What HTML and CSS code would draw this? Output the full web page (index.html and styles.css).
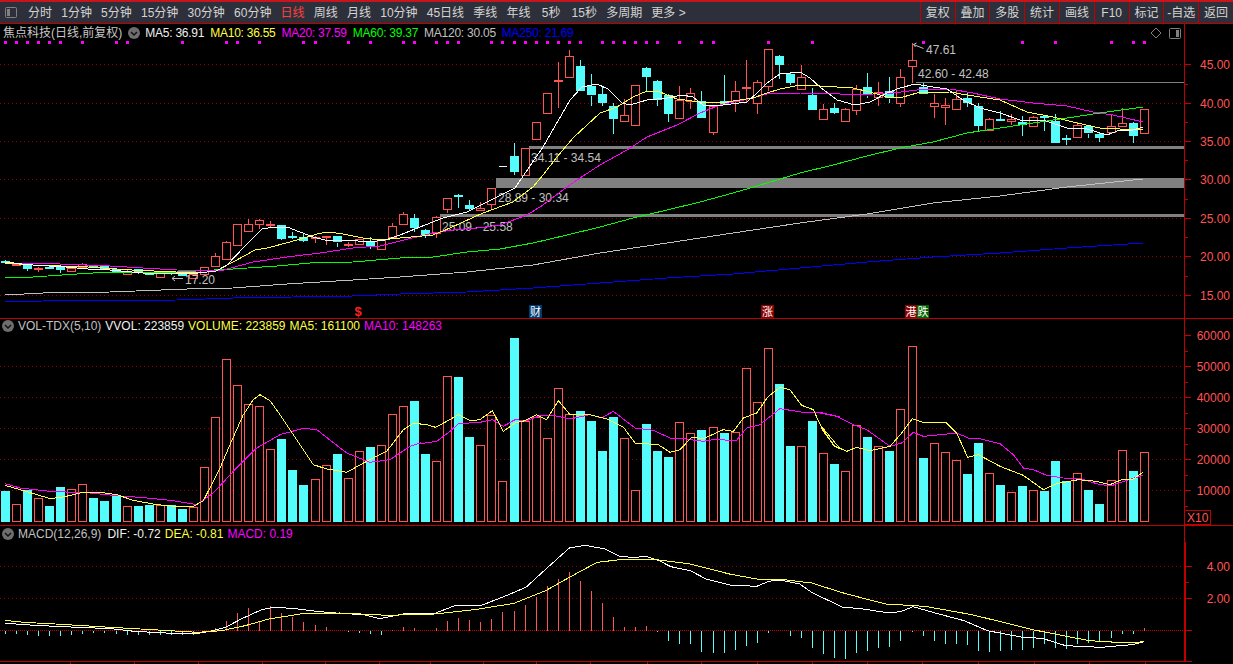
FILE: index.html
```html
<!DOCTYPE html>
<html lang="zh-CN">
<head>
<meta charset="utf-8">
<title>焦点科技</title>
<link rel="stylesheet" href="styles.css">
</head>
<body>
<div class="app">
  <header class="toolbar">
    <svg class="panel-icon toolbar-icon" viewBox="0 0 12 11"><rect class="pi-frame" x="0.5" y="0.5" width="11" height="10" rx="1"/><rect class="pi-fill" x="2" y="2" width="3" height="7"/></svg>
    <nav class="periods">
      <span>分时</span><span>1分钟</span><span>5分钟</span><span>15分钟</span><span>30分钟</span><span>60分钟</span><span class="active">日线</span><span>周线</span><span>月线</span><span>10分钟</span><span>45日线</span><span>季线</span><span>年线</span><span class="spaced">5秒</span><span class="spaced">15秒</span><span>多周期</span><span>更多 &gt;</span>
    </nav>
    <nav class="tools">
      <span>复权</span><span>叠加</span><span>多股</span><span>统计</span><span>画线</span><span>F10</span><span>标记</span><span>-自选</span><span>返回</span>
    </nav>
  </header>

  <section class="panel panel-price">
    <div class="legend">
      <span class="title">焦点科技(日线,前复权)</span>
      <svg class="chev chev-ma" viewBox="0 0 12 12"><circle class="chev-bg" cx="6" cy="6" r="6"/><path class="chev-mark" d="M3 5l3 3 3-3"/></svg>
      <span class="white ma">MA5: 36.91</span>
      <span class="yellow ma">MA10: 36.55</span>
      <span class="magenta ma">MA20: 37.59</span>
      <span class="green ma">MA60: 39.37</span>
      <span class="gray ma">MA120: 30.05</span>
      <span class="blue ma">MA250: 21.69</span>
      <span class="legend-icons">
        <svg class="diamond" viewBox="0 0 12 12"><path d="M6 1l5 5-5 5-5-5z"/></svg>
        <svg class="panel-icon" viewBox="0 0 12 11"><rect class="pi-frame" x="0.5" y="0.5" width="11" height="10" rx="1"/><rect class="pi-fill" x="7" y="2" width="3" height="7"/></svg>
      </span>
    </div>
    <svg id="price" class="plot plot-price" viewBox="0 40 1233 278"></svg>
  </section>

  <section class="panel panel-vol">
    <div class="legend">
      <svg class="chev chev-first" viewBox="0 0 12 12"><circle class="chev-bg" cx="6" cy="6" r="6"/><path class="chev-mark" d="M3 5l3 3 3-3"/></svg>
      <span class="gray vol-name">VOL-TDX(5,10)</span>
      <span class="white">VVOL: 223859</span>
      <span class="yellow">VOLUME: 223859</span>
      <span class="yellow">MA5: 161100</span>
      <span class="magenta">MA10: 148263</span>
    </div>
    <svg id="vol" class="plot plot-vol" viewBox="0 330 1233 195"></svg>
  </section>

  <section class="panel panel-macd">
    <div class="legend">
      <svg class="chev chev-first" viewBox="0 0 12 12"><circle class="chev-bg" cx="6" cy="6" r="6"/><path class="chev-mark" d="M3 5l3 3 3-3"/></svg>
      <span class="gray vol-name">MACD(12,26,9)</span>
      <span class="white">DIF: -0.72</span>
      <span class="yellow">DEA: -0.81</span>
      <span class="magenta">MACD: 0.19</span>
    </div>
    <svg id="macd" class="plot plot-macd" viewBox="0 542 1233 122"></svg>
  </section>
</div>
<script src="chart.js"></script>
</body>
</html>
```

FILE: styles.css
```css
* { box-sizing: border-box; }
html, body { margin: 0; height: 100%; background: #000; overflow: hidden; }
body { font: 12px/16px "Liberation Sans", "Noto Sans CJK SC", sans-serif; color: #c8c8c8; }
.app { width: 1233px; height: 664px; display: flex; flex-direction: column; }

.toolbar {
  height: 24px; flex: none; display: flex; align-items: center;
  background: #2d303a; border-top: 2px solid #c8141c; border-bottom: 1px solid #c00000;
  padding-left: 5px;
}
.toolbar-icon { margin-right: 11px; }
.periods { display: flex; gap: 9.2px; white-space: nowrap; color: #d4d4d4; }
.periods .active { color: #ff4040; }
.periods .spaced { margin-left: 2px; }
.tools { margin-left: auto; display: flex; align-self: stretch; color: #d4d4d4; }
.tools span { width: 34.8px; display: flex; align-items: center; justify-content: center; border-left: 1px solid #c00000; white-space: nowrap; }

.panel-icon { width: 12px; height: 11px; flex: none; }
.pi-frame { fill: none; stroke: #808080; }
.pi-fill { fill: #808080; }

.panel { flex: none; display: flex; flex-direction: column; }
.panel-price { height: 294px; }
.panel-vol { height: 207px; border-top: 1px solid #c00000; }
.panel-macd { height: 139px; border-top: 1px solid #c00000; }

.legend {
  height: 16px; width: 1185px; flex: none; display: flex; align-items: center; gap: 4px;
  border-right: 1px solid #c00000; padding-left: 2px; white-space: nowrap;
}
.panel-price .legend { padding-top: 2px; padding-left: 3px; gap: 6px; }
.panel-vol .legend { height: 11px; padding-top: 2px; }
.panel-macd .vol-name { margin-right: 2px; }
.chev { width: 12px; height: 12px; flex: none; }
.chev-first { margin-right: 0; }
.chev-ma { margin-right: -1px; }
.chev-bg { fill: #6e6e6e; }
.chev-mark { fill: none; stroke: #111; stroke-width: 1.5; }
.ma { letter-spacing: -0.25px; }
.white { color: #f0f0f0; }
.yellow { color: #ffff40; }
.magenta { color: #ff00ff; }
.green { color: #00ff00; }
.gray { color: #c0c0c0; }
.blue { color: #0000ff; }
.legend-icons { margin-left: auto; display: flex; align-items: center; gap: 7px; padding-right: 3px; }
.diamond { width: 12px; height: 12px; }
.diamond path { fill: none; stroke: #808080; }

.plot { display: block; width: 1233px; flex: none; }
.plot-price { height: 278px; }
.plot-vol { height: 195px; }
.plot-macd { height: 122px; }
.plot text { font: 12px "Liberation Sans", "Noto Sans CJK SC", sans-serif; }

.crisp { shape-rendering: crispEdges; }
.grid { stroke: #900000; stroke-dasharray: 1 3; fill: none; }
.zero { stroke: #d00000; stroke-dasharray: 1 1; fill: none; }
.axis { stroke: #c00000; fill: none; }
.axis-wide { stroke: #c00000; stroke-width: 2; fill: none; }
.tick { stroke: #c00000; }
.axis-label { fill: #ff5454; text-anchor: end; }
.band { fill: #808080; }
.dot { fill: #ff00ff; }
.up { stroke: #ff5454; fill: #000; }
.up-solid { fill: #ff5454; }
.up-line { stroke: #ff5454; fill: none; }
.down { fill: #54fcfc; }
.down-line { stroke: #54fcfc; fill: none; }
.flat { fill: #f0f0f0; }
.line { fill: none; }
.l-white { stroke: #ffffff; }
.l-yellow { stroke: #ffff40; }
.l-magenta { stroke: #ff00ff; }
.l-green { stroke: #00ff00; }
.l-gray { stroke: #c0c0c0; }
.l-blue { stroke: #0000ff; }
.note { fill: #c0c0c0; }
.note-line { fill: none; stroke: #c0c0c0; }
.tag-text { fill: #fff; text-anchor: middle; }
.plot text.tag-text { font-size: 11px; }
.tag-blue { fill: #003a70; }
.tag-red { fill: #8b0000; }
.tag-green { fill: #006400; }
.plot text.dollar { fill: #ff2020; font-size: 13px; font-weight: bold; text-anchor: middle; }
.x10-box { fill: #000; stroke: #c00000; }
.x10-text { fill: #ff5454; }
```

FILE: chart.js
```js
(function () {
  var NS = 'http://www.w3.org/2000/svg';
  function add(svg, tag, attrs, text) {
    var n = document.createElementNS(NS, tag);
    for (var k in attrs) n.setAttribute(k, attrs[k]);
    if (text !== undefined) n.textContent = text;
    svg.appendChild(n);
    return n;
  }
  function hline(svg, y, x1, x2, cls) {
    add(svg, 'line', { x1: x1, x2: x2, y1: y + 0.5, y2: y + 0.5, 'class': cls + ' crisp' });
  }
  function vline(svg, x, y1, y2, cls) {
    add(svg, 'line', { x1: x + 0.5, x2: x + 0.5, y1: y1, y2: y2, 'class': cls + ' crisp' });
  }
  function poly(svg, pts, cls) {
    var s = [];
    for (var i = 0; i < pts.length; i += 2) s.push(pts[i] + ',' + pts[i + 1]);
    add(svg, 'polyline', { points: s.join(' '), 'class': 'line crisp ' + cls });
  }
  function zoom(pts, ox, oy, sx) {
    var out = [];
    for (var i = 0; i < pts.length; i += 2) {
      out.push(ox + pts[i] / (sx || 3), oy + pts[i + 1] / 3);
    }
    return out;
  }
  function left(i) { return Math.round(1 + 11.055 * i); }

  var price = document.getElementById('price');
  var vol = document.getElementById('vol');
  var macd = document.getElementById('macd');

  /* Volume: top of each bar (3x px from y=318) and its side */
  var volTop = [
    [519,'c'],[559,'r'],[517,'c'],[541,'r'],[564,'c'],[507,'c'],[514,'r'],[499,'r'],[540,'c'],[549,'c'],
    [533,'c'],[565,'r'],[564,'c'],[561,'c'],[562,'r'],[562,'c'],[573,'c'],[568,'r'],[448,'r'],[298,'r'],
    [124,'r'],[202,'r'],[259,'r'],[265,'r'],[394,'r'],[363,'c'],[456,'c'],[501,'c'],[484,'r'],[442,'r'],
    [408,'c'],[481,'r'],[400,'r'],[387,'c'],[382,'r'],[289,'r'],[265,'r'],[249,'c'],[408,'c'],[430,'r'],
    [175,'r'],[177,'c'],[357,'c'],[382,'r'],[292,'r'],[490,'r'],[60,'c'],[308,'r'],[296,'r'],[361,'r'],
    [211,'r'],[287,'r'],[279,'c'],[309,'c'],[399,'c'],[297,'c'],[361,'r'],[517,'r'],[318,'c'],[399,'c'],
    [417,'c'],[313,'r'],[346,'r'],[336,'c'],[328,'r'],[345,'c'],[343,'r'],[151,'r'],[253,'r'],[91,'r'],
    [198,'c'],[384,'c'],[385,'r'],[309,'c'],[406,'r'],[438,'c'],[460,'r'],[322,'r'],[357,'c'],[385,'r'],
    [399,'c'],[274,'r'],[85,'r'],[420,'c'],[376,'r'],[403,'r'],[427,'r'],[468,'c'],[375,'c'],[466,'r'],
    [501,'c'],[523,'r'],[504,'c'],[517,'r'],[519,'c'],[429,'c'],[490,'c'],[466,'r'],[516,'c'],[558,'c'],
    [487,'r'],[397,'r'],[459,'c'],[403,'r']
  ];

  /* Candles: high, body top, body bottom, low */
  var A = [
    [450,454,456,461],[458,462,467,469],[462,465,477,483],[472,475,479,486],[468,470,476,478],
    [470,472,480,488],[470,473,482,484],[460,462,472,474],[464,467,472,474],[465,467,476,478],
    [474,476,486,488],[480,482,491,493],[476,478,486,491],[488,490,497,499],[488,490,503,503],
    [482,484,492,494],[486,488,497,499],[490,492,503,505],[470,472,494,496],[430,439,470,472],
    [393,397,448,450],[343,343,407,407],[326,343,365,365],[326,331,344,357],[333,343,346,353],
    [344,346,387,389],[366,378,384,386],[372,380,393,395],[379,381,386,400],[377,379,384,405],
    [377,379,398,411],[397,402,405,411],[386,388,403,405],[381,395,411,416],[388,390,416,416],
    [340,349,381,383]
  ];
  var B = [
    [487,493,524,526],[492,505,534,546],[538,540,555,563],[498,502,551,563],[443,445,479,488],
    [433,435,437,473],[450,465,477,479],[457,475,482,484],[413,415,464,480],null,
    [279,319,366,374],[293,295,376,378],[215,217,269,271],[128,130,191,193],[37,91,93,173],
    [0,19,83,85],[30,48,122,124],[72,109,137,167],[108,132,160,168],[160,168,207,252],
    [148,196,215,217],[104,106,227,229],[52,54,81,125],[91,93,149,168],[133,135,191,215],
    [108,149,204,208],[113,130,155,178],[123,153,204,204],[165,167,245,254],[75,153,163,165],
    [94,124,155,187],[30,111,113,160],[91,97,161,192],[-2,-2,108,122],[16,18,45,87],
    [67,72,99,105]
  ];
  var C = [
    [46,82,118,120],[114,135,179,181],[162,176,206,209],[160,174,188,191],[174,176,212,214],
    [105,117,181,195],[70,112,137,143],[97,125,139,167],[82,124,146,158],[57,82,161,170],
    [-22,31,49,100],[98,112,134,136],[132,160,170,204],[144,166,172,224],[120,146,176,179],
    [130,144,158,170],[160,169,228,247],[204,206,238,240],[184,206,208,210],[193,208,215,224],
    [198,215,224,258],[198,200,227,231],[196,198,204,243],[192,213,278,280],[255,265,270,284],
    [216,226,263,265],[227,229,251,265],[248,252,263,276],[193,229,248,250],[175,220,230,232],
    [216,218,258,278],[176,178,251,253]
  ];
  function toY(base, row) {
    return row.map(function (z) { return base + z / 3; });
  }
  var candles = [];
  A.forEach(function (r) { candles.push(toY(110, r)); });
  B.forEach(function (r) { candles.push(r ? toY(50, r) : null); });
  C.forEach(function (r) { candles.push(toY(50, r)); });

  /* Price panel */
  [64, 103, 141, 179, 218, 256, 295].forEach(function (y) { hline(price, y, 0, 1184, 'grid'); });
  var dotIdx = [0,1,2,3,4,5,7,10,11,16,20,21,23,27,28,31,33,36,37,39,40,41,44,45,46,47,48,49,50,51,52,54,55,56,57,58,59,61,63,64,69,73,83,92,95,100,102,103];
  dotIdx.forEach(function (i) {
    add(price, 'rect', { x: Math.round(4 + 11.055 * i), y: 41, width: 3, height: 3, 'class': 'dot crisp' });
  });

  add(price, 'rect', { x: 916, y: 82, width: 268, height: 1, 'class': 'band crisp' });
  add(price, 'rect', { x: 529, y: 146, width: 655, height: 3, 'class': 'band crisp' });
  add(price, 'rect', { x: 496, y: 178, width: 688, height: 10, 'class': 'band crisp' });
  add(price, 'rect', { x: 440, y: 214, width: 744, height: 3, 'class': 'band crisp' });

  candles.forEach(function (c, i) {
    var x = left(i), red = volTop[i][1] === 'r';
    if (!c) return;
    var h = c[0], t = c[1], b = c[2], l = c[3];
    var w = (red ? 'up-line' : 'down-line');
    vline(price, x + 4, h, t, w);
    vline(price, x + 4, b, l, w);
    if (b - t < 2) {
      add(price, 'rect', { x: x, y: Math.round(t), width: 9, height: 2, 'class': (red ? 'up-solid' : 'down') + ' crisp' });
    } else if (red) {
      add(price, 'rect', { x: x + 0.5, y: Math.round(t) + 0.5, width: 8, height: Math.round(b - t), 'class': 'up crisp' });
    } else {
      add(price, 'rect', { x: x, y: Math.round(t), width: 9, height: Math.round(b - t), 'class': 'down crisp' });
    }
  });
  add(price, 'rect', { x: 499, y: 166, width: 8, height: 1, 'class': 'flat crisp' });

  [['34.11 - 34.54', 531, 162], ['28.89 - 30.34', 498, 202], ['25.09 - 25.58', 442, 231], ['42.60 - 42.48', 918, 78]]
    .forEach(function (t) { add(price, 'text', { x: t[1], y: t[2], 'class': 'note' }, t[0]); });
  add(price, 'text', { x: 926, y: 54, 'class': 'note' }, '47.61');
  add(price, 'text', { x: 185, y: 284, 'class': 'note' }, '17.20');
  add(price, 'path', { d: 'M913.5 44.5l10 4M913.5 44.5l3-1.5M913.5 44.5l2 2.5', 'class': 'note-line' });
  add(price, 'path', { d: 'M172 278.5h11M172 278.5l3-2.5M172 278.5l3 2.5', 'class': 'note-line' });

  poly(price, [5,295,43,293,110,292,187,289,233,288,287,284,353,280,400,277,467,272,533,265,600,253,667,243,733,233,800,223,867,214,933,203,1000,196,1067,187,1143,179], 'l-gray');
  poly(price, [5,302,43,301,177,300,233,298,353,296,400,294,467,292,533,288,600,283,667,278,733,274,800,268,867,262,933,257,1000,253,1067,248,1143,243], 'l-blue');
  poly(price, [5,278,33,277,77,274,110,272,177,272,233,269,277,266,310,263,353,262,400,258,433,257,467,252,500,249,533,243,567,235,600,227,633,218,667,210,700,202,733,193,767,183,800,173,833,165,867,156,900,148,933,142,967,133,1000,128,1033,123,1067,118,1100,113,1143,107], 'l-green');
  poly(price, [5,263,60,264,110,266,143,268,177,270,220,271,253,262,287,257,320,253,353,248,380,246,400,241,433,233,453,230,477,228,500,225,527,215,543,205,567,187,580,178,600,165,627,150,647,137,677,125,700,113,720,105,753,98,770,93,800,93,840,94,873,94,893,93,917,90,950,89,973,93,1000,99,1033,103,1067,106,1093,112,1113,115,1143,122], 'l-magenta');
  poly(price, [5,263,33,265,88,267,132,270,176,272,198,273,216,271,235,261,255,250,267,248,290,242,317,234,328,232,343,234,363,238,380,240,400,238,433,235,450,228,483,213,513,202,533,187,543,175,557,157,573,138,587,125,600,113,617,107,633,97,647,91,660,92,677,99,700,102,720,103,753,98,767,93,780,89,800,85,820,86,853,88,870,92,887,97,903,97,917,93,950,92,967,95,1000,100,1027,112,1053,117,1077,123,1100,128,1120,129,1143,129], 'l-yellow');
  poly(price, [5,262,22,264,33,265,66,267,88,269,110,270,132,272,154,274,176,273,198,273,216,271,227,265,245,246,262,229,275,227,287,227,300,232,313,237,325,240,340,240,358,241,370,242,385,240,400,235,420,227,443,218,467,212,515,188,543,147,570,100,582,87,597,84,608,89,622,103,630,105,647,100,667,98,682,95,693,97,703,105,723,105,747,102,757,93,767,83,780,74,800,72,810,78,820,87,837,100,855,105,870,102,887,93,900,88,915,84,933,87,947,89,963,100,980,108,1000,113,1020,120,1043,120,1067,128,1087,129,1107,135,1120,130,1133,130,1143,127], 'l-white');

  add(price, 'text', { x: 358, y: 316, 'class': 'dollar' }, '$');
  [[529, 13, 'tag-blue', '财'], [761, 13, 'tag-red', '涨'], [905, 12, 'tag-red', '港'], [917, 12, 'tag-green', '跌']].forEach(function (t) {
    add(price, 'rect', { x: t[0], y: 305, width: t[1], height: 13, 'class': t[2] });
    add(price, 'text', { x: t[0] + t[1] / 2, y: 316, 'class': 'tag-text' }, t[3]);
  });

  vline(price, 1184, 40, 318, 'axis');
  [[64,'45.00'],[103,'40.00'],[141,'35.00'],[179,'30.00'],[218,'25.00'],[256,'20.00'],[295,'15.00']].forEach(function (t) {
    hline(price, t[0], 1185, 1191, 'tick');
    add(price, 'text', { x: 1230, y: t[0] + 5, 'class': 'axis-label' }, t[1]);
  });
  [84, 122, 160, 199, 237, 276].forEach(function (y) { hline(price, y, 1185, 1188, 'tick'); });

  /* Volume panel */
  [366, 397, 428, 459, 490].forEach(function (y) { hline(vol, y, 0, 1184, 'grid'); });
  volTop.forEach(function (v, i) {
    var y = Math.round(318 + v[0] / 3), x = left(i);
    if (v[1] === 'r') add(vol, 'rect', { x: x + 0.5, y: y + 0.5, width: 8, height: 522 - y - 1, 'class': 'up crisp' });
    else add(vol, 'rect', { x: x, y: y, width: 9, height: 522 - y, 'class': 'down crisp' });
  });
  var vMa10 = zoom([15,497,60,510,150,520,270,525,350,533,420,538,520,548,590,560,640,525,700,460,770,390,840,350,910,331,950,335,1040,405,1110,433,1170,425,1230,385,1260,375],0,318)
    .concat(zoom([0,377,50,370,90,340,115,317,180,313,217,305,250,325,285,305,320,308,360,293,400,292,450,303,510,290,545,300,580,280,645,330,700,337,750,360,790,362,850,370,880,365,950,367,980,330,1020,320,1080,272,1150,283,1200,283,1260,297],420,318))
    .concat(zoom([0,285,50,295,100,320,140,335,210,385,245,375,280,343,310,355,360,350,410,345,445,360,480,362,540,377,580,410,610,450,640,455,680,472,730,480,780,482,840,500,875,503,920,487,970,472],820,318));
  var vMa5 = zoom([15,502,60,515,105,528,150,542,190,537,240,525,300,523,350,530,400,547,470,560,540,566,580,565,610,548,640,490,660,450,690,380,730,290,760,245,780,230,810,248,840,290,880,350,920,410,940,440,980,453,1040,463,1100,430,1160,400,1210,335,1240,316,1260,316],0,318)
    .concat(zoom([0,319,20,320,47,328,80,310,115,290,150,308,180,305,217,278,250,340,285,315,315,308,350,290,380,305,415,248,450,290,510,290,560,303,610,327,645,375,715,380,750,403,780,395,815,358,850,362,910,335,940,340,970,300,1010,285,1045,235,1080,208,1110,215,1145,262,1180,275,1210,340,1245,385,1260,392],420,318))
    .concat(zoom([0,320,40,382,80,400,110,388,150,398,210,385,245,345,277,302,310,313,378,313,410,345,443,418,475,410,540,445,610,472,670,515,710,497,775,485,830,490,870,500,905,485,940,483,970,462],820,318));
  poly(vol, vMa10, 'l-magenta');
  poly(vol, vMa5, 'l-yellow');

  vline(vol, 1184, 330, 525, 'axis');
  [[335,'60000'],[366,'50000'],[397,'40000'],[428,'30000'],[459,'20000'],[490,'10000']].forEach(function (t) {
    hline(vol, t[0], 1185, 1191, 'tick');
    add(vol, 'text', { x: 1230, y: t[0] + 5, 'class': 'axis-label' }, t[1]);
  });
  [351, 382, 413, 444, 475, 506].forEach(function (y) { hline(vol, y, 1185, 1188, 'tick'); });
  add(vol, 'rect', { x: 1184.5, y: 510.5, width: 26, height: 14, 'class': 'x10-box crisp' });
  add(vol, 'text', { x: 1187, y: 522, 'class': 'x10-text' }, 'X10');

  /* MACD panel */
  [566, 598].forEach(function (y) { hline(macd, y, 0, 1184, 'grid'); });
  hline(macd, 630, 0, 1184, 'zero');
  var mz = [330,330,333,335,335,335,334,330,326,327,329,332,332,332,332,332,332,332,325,312,291,267,252,290,246,267,279,294,303,309,320,323,326,330,332,319,309,312,320,312,291,282,288,294,285,264,261,243,219,186,165,144,171,201,237,279,310,309,305,324,350,360,360,383,387,387,377,366,357,327,320,336,342,372,390,402,405,387,381,372,369,351,324,336,351,360,360,363,381,384,380,378,378,372,360,372,375,360,357,352,342,330,330,312];
  mz.forEach(function (z, i) {
    if (z === 320) return;
    var x = left(i) + 4;
    var y = 524 + z / 3;
    vline(macd, x, Math.min(y, 631), Math.max(y, 631), z < 320 ? 'up-line' : 'down-line');
  });
  var dif = zoom([13,297,60,302,140,307,280,314,340,322,420,327,490,330,530,322,570,310,610,285,660,258,690,250,740,253,800,262,860,268,920,272,960,284,1020,270,1100,268,1150,245,1220,243,1280,215,1330,190,1390,125,1440,72,1480,64,1530,75,1568,97],0,524,2.529)
    .concat(zoom([30,100,70,98,100,110,130,128,180,140,220,165,280,183,350,187,380,172,410,168,460,180,490,205,570,250,610,253,690,267,720,262,750,248,800,265,880,290,940,320,1030,340,1080,343,1140,365,1230,370,1310,362,1340,353],620,524,2.558));
  var dea = zoom([13,289,60,295,140,300,280,310,400,318,500,325,560,320,620,305,680,285,760,270,860,267,980,274,1100,270,1200,257,1300,238,1380,200,1440,160,1510,115,1568,107],0,524,2.529)
    .concat(zoom([80,105,180,120,280,150,350,165,420,167,490,177,580,210,680,240,780,247,900,272,1060,318,1200,350,1300,357,1340,353],620,524,2.558));
  poly(macd, dif, 'l-white');
  poly(macd, dea, 'l-yellow');

  add(macd, 'line', { x1: 1185, x2: 1185, y1: 542, y2: 661, 'class': 'axis-wide crisp' });
  hline(macd, 661, 0, 1192, 'axis');
  [[566,'4.00'],[598,'2.00']].forEach(function (t) {
    hline(macd, t[0], 1186, 1192, 'tick');
    add(macd, 'text', { x: 1230, y: t[0] + 5, 'class': 'axis-label' }, t[1]);
  });
  hline(macd, 582, 1186, 1189, 'tick');
  hline(macd, 630, 1186, 1192, 'tick');
  [70,134,198,262,325,379,430,483,536,590,647,701,757,812,867,922,978,1034,1089,1145].forEach(function (x) {
    vline(macd, x, 662, 664, 'tick');
  });
})();
```
